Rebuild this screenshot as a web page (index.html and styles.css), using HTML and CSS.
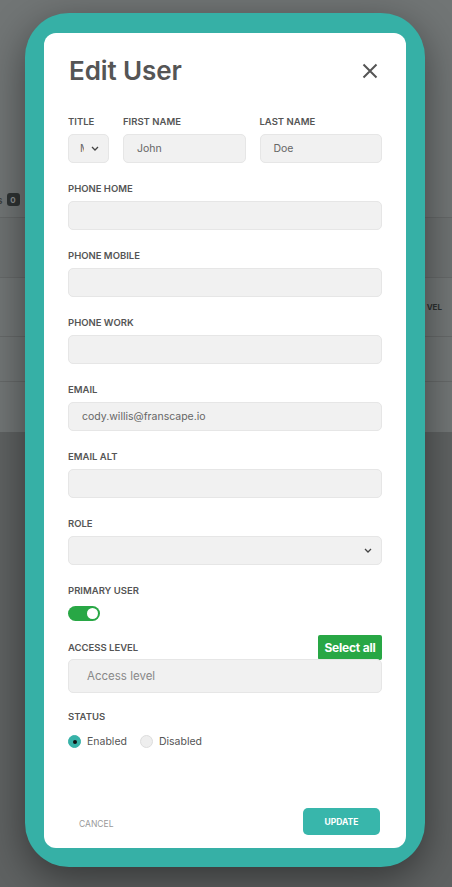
FILE: index.html
```html
<!DOCTYPE html>
<html lang="en">
<head>
<meta charset="utf-8">
<title>Edit User</title>
<link rel="stylesheet" href="styles.css">
</head>
<body>
<div class="page">
  <div class="page-top">
    <div class="filter"><span class="filter-label">s</span><span class="badge">0</span></div>
  </div>
  <div class="table">
    <div class="trow r1"></div>
    <div class="trow r2"><span class="th">VEL</span></div>
    <div class="trow r3"></div>
    <div class="trow r4"></div>
  </div>
</div>

<div class="overlay">
  <div class="frame">
    <div class="card">
      <div class="card-head">
        <h1 class="title">Edit User</h1>
        <button class="close" aria-label="Close">
          <svg width="16" height="16" viewBox="0 0 16 16"><path d="M1.5 1.5 L14.5 14.5 M14.5 1.5 L1.5 14.5" stroke="#555" stroke-width="2" fill="none" stroke-linecap="butt"/></svg>
        </button>
      </div>

      <div class="name-row">
        <div class="field">
          <label class="lbl">Title</label>
          <div class="input select small"><span class="clip">Mr</span><svg class="chev" width="8" height="5" viewBox="0 0 8 5"><path d="M1 1 L4 4 L7 1" stroke="#444" stroke-width="1.3" fill="none"/></svg></div>
        </div>
        <div class="field">
          <label class="lbl">First name</label>
          <div class="input">John</div>
        </div>
        <div class="field">
          <label class="lbl">Last name</label>
          <div class="input">Doe</div>
        </div>
      </div>

      <div class="field grp">
        <label class="lbl">Phone home</label>
        <div class="input"></div>
      </div>
      <div class="field grp">
        <label class="lbl">Phone mobile</label>
        <div class="input"></div>
      </div>
      <div class="field grp">
        <label class="lbl">Phone work</label>
        <div class="input"></div>
      </div>
      <div class="field grp">
        <label class="lbl">Email</label>
        <div class="input">cody.willis@franscape.io</div>
      </div>
      <div class="field grp">
        <label class="lbl">Email alt</label>
        <div class="input"></div>
      </div>
      <div class="field grp">
        <label class="lbl">Role</label>
        <div class="input select"><span></span><svg class="chev" width="8" height="5" viewBox="0 0 8 5"><path d="M1 1 L4 4 L7 1" stroke="#444" stroke-width="1.3" fill="none"/></svg></div>
      </div>
      <div class="field grp">
        <label class="lbl">Primary user</label>
        <div class="toggle"><span class="knob"></span></div>
      </div>
      <div class="field access">
        <div class="access-head">
          <label class="lbl">Access level</label>
          <button class="select-all">Select all</button>
        </div>
        <div class="input big placeholder">Access level</div>
      </div>
      <div class="field status">
        <label class="lbl">Status</label>
        <div class="radios">
          <span class="radio on"></span><span class="rlabel">Enabled</span>
          <span class="radio"></span><span class="rlabel">Disabled</span>
        </div>
      </div>

      <div class="footer">
        <button class="cancel">CANCEL</button>
        <button class="update">UPDATE</button>
      </div>
    </div>
  </div>
</div>
</body>
</html>
```

FILE: styles.css
```css
* { box-sizing: border-box; }
html, body { margin: 0; padding: 0; }
body {
  width: 452px;
  height: 887px;
  overflow: hidden;
  font-family: Inter, "Noto Sans", "Liberation Sans", sans-serif;
  background: #5f6262;
  position: relative;
}
.page { width: 452px; }
.page-top {
  height: 218px;
  background: #717575;
  border-bottom: 1px solid #656868;
  display: flex;
  align-items: flex-end;
}
.filter {
  display: flex;
  align-items: center;
  gap: 4px;
  margin: 0 0 11px -3px;
}
.filter-label { color: #3e4242; font-size: 10px; font-weight: 600; }
.badge {
  background: #2f3333;
  color: #8c9090;
  font-size: 8px;
  font-weight: 700;
  width: 13px;
  height: 13px;
  border-radius: 3px;
  display: flex;
  align-items: center;
  justify-content: center;
}
.table { background: #727676; }
.trow { border-bottom: 1px solid #666969; display: flex; align-items: center; justify-content: flex-end; }
.r1 { height: 60px; background: #6e7272; }
.r2 { height: 59px; }
.r3 { height: 45px; }
.r4 { height: 50px; border-bottom: none; }
.th { color: #2d3131; font-size: 8px; font-weight: 700; margin-right: 10px; }

.overlay {
  position: absolute;
  inset: 0;
  display: flex;
  justify-content: flex-start;
  align-items: flex-start;
  padding: 13px 0 0 25px;
}
.frame {
  width: 400px;
  height: 854px;
  background: #36b0a6;
  border-radius: 44px;
  padding: 20px 19px 19px 19px;
  box-shadow: 0 12px 40px rgba(0,0,0,0.45);
}
.card {
  width: 362px;
  height: 815px;
  background: #fff;
  border-radius: 12px;
  padding: 21px 24px 13px 24px;
  display: flex;
  flex-direction: column;
}
.card-head {
  display: flex;
  justify-content: space-between;
  align-items: center;
  margin-bottom: 28px;
}
.title {
  margin: 0;
  font-size: 26px;
  line-height: 34px;
  font-weight: 600;
  color: #555;
  padding-left: 1px;
  letter-spacing: -0.1px;
}
.close {
  border: none;
  background: none;
  padding: 0;
  width: 16px;
  height: 16px;
  margin-right: 4px;
  display: flex;
}
.lbl {
  display: block;
  font-size: 9.5px;
  line-height: 12px;
  font-weight: 600;
  color: #555;
  text-transform: uppercase;
  margin-bottom: 6px;
}
.name-row {
  display: grid;
  grid-template-columns: 41px 1fr 1fr;
  gap: 14px;
}
.field { display: flex; flex-direction: column; }
.grp { margin-top: 20px; }
.input {
  height: 29px;
  background: #f1f1f1;
  border: 1px solid #e6e6e6;
  border-radius: 5px;
  padding: 0 13px;
  font-size: 10.5px;
  color: #666;
  display: flex;
  align-items: center;
}
.select { justify-content: space-between; padding-right: 9px; }
.select.small { padding: 0 9px 0 11px; }
.clip { width: 4px; overflow: hidden; white-space: nowrap; color: #666; }
.chev { flex: none; }
.toggle {
  width: 32px;
  height: 15px;
  border-radius: 8px;
  background: #28a745;
  position: relative;
  margin-top: 3px;
}
.knob {
  position: absolute;
  right: 2px;
  top: 2px;
  width: 11px;
  height: 11px;
  border-radius: 50%;
  background: #fff;
}
.access { margin-top: 14px; }
.access-head {
  display: flex;
  justify-content: space-between;
  align-items: center;
  height: 25px;
  margin-bottom: -1px;
}
.access-head .lbl { margin: 0; }
.select-all {
  height: 25px;
  width: 64px;
  background: #28a745;
  color: #fff;
  border: none;
  border-radius: 2px;
  font-family: inherit;
  font-size: 12px;
  font-weight: 700;
  padding: 0;
  letter-spacing: -0.2px;
}
.big { height: 34px; padding-left: 18px; font-size: 11.5px; }
.placeholder { color: #888; }
.status { margin-top: 18px; }
.status .lbl { margin-bottom: 12px; }
.radios { display: flex; align-items: center; }
.radio {
  width: 13px;
  height: 13px;
  border-radius: 50%;
  background: #eee;
  border: 1px solid #ddd;
  margin-right: 6px;
  position: relative;
}
.radio.on { background: #37b2a8; border-color: #37b2a8; }
.radio.on::after {
  content: "";
  position: absolute;
  left: 3.5px;
  top: 3.5px;
  width: 4px;
  height: 4px;
  border-radius: 50%;
  background: #111;
}
.rlabel { font-size: 10.5px; color: #555; margin-right: 13px; }
.footer {
  margin-top: auto;
  display: flex;
  justify-content: space-between;
  align-items: center;
}
.cancel {
  border: none;
  background: none;
  color: #999;
  font-family: inherit;
  font-size: 8.5px;
  padding: 0 11px;
  margin-top: 4px;
}
.update {
  width: 77px;
  height: 27px;
  background: #38b6ab;
  color: #fff;
  border: none;
  border-radius: 5px;
  font-family: inherit;
  font-size: 8.5px;
  font-weight: 700;
  margin-right: 2px;
}
```
